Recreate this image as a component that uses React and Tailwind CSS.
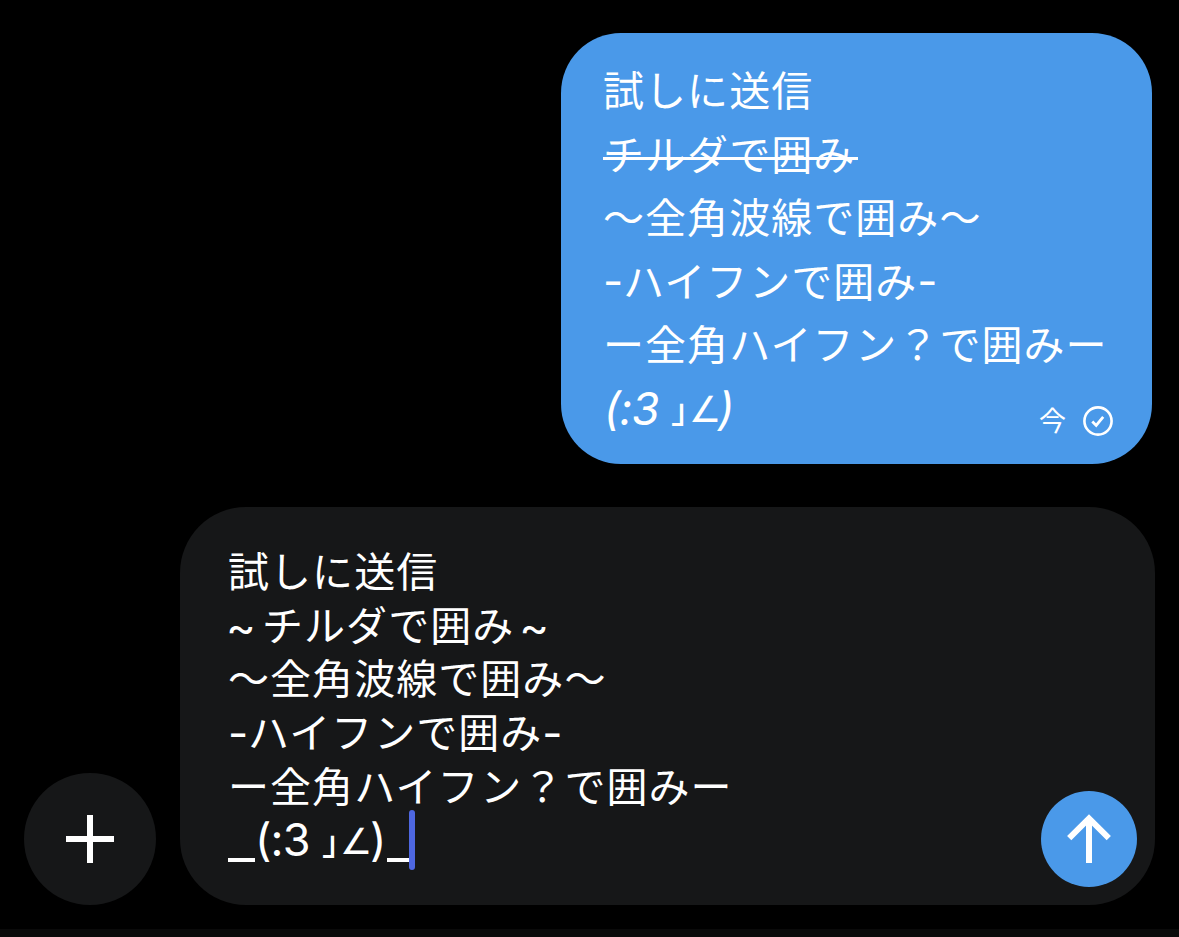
const SENT_LINES = [
  { id: 1, text: "試しに送信" },
  { id: 2, text: "チルダで囲み", struck: true },
  { id: 3, text: "～全角波線で囲み～" },
  { id: 4, text: "ハイフンで囲み", mark: "-" },
  { id: 5, text: "ー全角ハイフン？で囲みー" },
];

const DRAFT_LINES = [
  { id: 1, text: "試しに送信" },
  { id: 2, text: "チルダで囲み", mark: "~" },
  { id: 3, text: "～全角波線で囲み～" },
  { id: 4, text: "ハイフンで囲み", mark: "-" },
  { id: 5, text: "ー全角ハイフン？で囲みー" },
];

// latin marks use a different font and size than the kana around them
function Mark({ char, end }) {
  if (!char) return null;
  if (char === "~") {
    return (
      <span
        className={`mt-[6px] w-[34px] font-['Inter',sans-serif] text-[45px] leading-none tracking-normal ${
          end ? "pl-[5px]" : "-ml-[2px] mr-[2px]"
        }`}
      >
        {char}
      </span>
    );
  }
  return (
    <span className="mt-[4px] w-[20px] text-center font-['Inter',sans-serif] text-[44px] leading-none tracking-normal">
      {char}
    </span>
  );
}

function Line({ line }) {
  return (
    <>
      <Mark char={line.mark} />
      <span>{line.text}</span>
      <Mark char={line.mark} end />
    </>
  );
}

// the corner bracket and the angle stay upright even when the rest is italic
function Kaomoji({ italic }) {
  return (
    <div
      className={`flex items-center font-['Inter',sans-serif] text-[45px] leading-none tracking-[-0.8px] [font-feature-settings:'calt'_0] ${
        italic ? "italic" : ""
      }`}
    >
      <span className="w-[54px]">(:3</span>
      <span className="ml-[13px] mt-[2px] w-[18px] font-['Noto_Sans_CJK_JP',sans-serif] text-[34px] font-medium not-italic">
        ｣
      </span>
      <span className="mt-[4px] w-[30px] font-['DejaVu_Sans',sans-serif] text-[36px] not-italic">
        ∠
      </span>
      <span className={italic ? "-ml-px" : ""}>)</span>
    </div>
  );
}

function SentBubble() {
  return (
    <div className="mr-[27px] flex h-[431px] w-[591px] flex-col self-end rounded-[60px] bg-[#4a99e9] pl-[42px] pt-[24px]">
      {SENT_LINES.map((line) => (
        <div key={line.id} className="flex h-[63.5px] items-center">
          <div className="relative flex items-center">
            <Line line={line} />
            {line.struck && (
              <span className="absolute left-0 top-1/2 mt-[5px] h-[3px] w-[255px] bg-white" />
            )}
          </div>
        </div>
      ))}
      <div className="mt-[2px] flex h-[63.5px] items-center justify-between pl-px pr-[39px]">
        <Kaomoji italic />
        <div className="mt-[25px] flex items-center gap-[17px] text-[27px] leading-none tracking-normal">
          <span className="-mt-[2px]">今</span>
          <svg
            className="h-[30px] w-[30px]"
            viewBox="0 0 30 30"
            fill="none"
            stroke="currentColor"
            strokeWidth="2.6"
          >
            <circle cx="15" cy="15" r="13.6" />
            <path d="M9.3 15.6l3.9 3.9 7-8.6" strokeWidth="2.8" />
          </svg>
        </div>
      </div>
    </div>
  );
}

function Composer() {
  return (
    <div className="mt-[43px] flex items-end gap-[24px] pl-[24px]">
      <button className="flex h-[132px] w-[132px] items-center justify-center rounded-full bg-[#161718]">
        <svg
          className="h-[48px] w-[48px]"
          viewBox="0 0 48 48"
          stroke="white"
          strokeWidth="6"
        >
          <path d="M24 0v48M0 24h48" />
        </svg>
      </button>
      <div className="flex h-[398px] w-[975px] items-end justify-between rounded-[66px] bg-[#161718] pl-[48px] pr-[18px]">
        <div className="flex h-full flex-col pt-[36px]">
          {DRAFT_LINES.map((line) => (
            <div key={line.id} className="flex h-[53.6px] items-center">
              <Line line={line} />
            </div>
          ))}
          <div className="mt-[2px] flex h-[53.6px] items-center">
            <span className="mt-[40px] h-[4px] w-[27px] bg-white" />
            <Kaomoji />
            <span className="ml-px mt-[40px] h-[4px] w-[22px] bg-white" />
            <span className="h-[60px] w-[6px] rounded-full bg-[#4e67e0]" />
          </div>
        </div>
        <button className="mb-[18px] flex h-[96px] w-[96px] items-center justify-center rounded-full bg-[#4a99e9]">
          <svg
            className="h-[50px] w-[44px]"
            viewBox="0 0 44 50"
            fill="none"
            stroke="white"
            strokeWidth="6"
          >
            <path d="M22 4v45M2.2 24.2L22 4.4l19.8 19.8" />
          </svg>
        </button>
      </div>
    </div>
  );
}

export default function App() {
  return (
    <div className="flex h-[937px] w-[1179px] flex-col overflow-hidden bg-black pt-[33px] font-['Noto_Sans_CJK_JP',sans-serif] text-[41px] leading-none tracking-[1.05px] text-white">
      <SentBubble />
      <Composer />
      <div className="mt-auto h-[8px] bg-[#0a0a0a]" />
    </div>
  );
}
